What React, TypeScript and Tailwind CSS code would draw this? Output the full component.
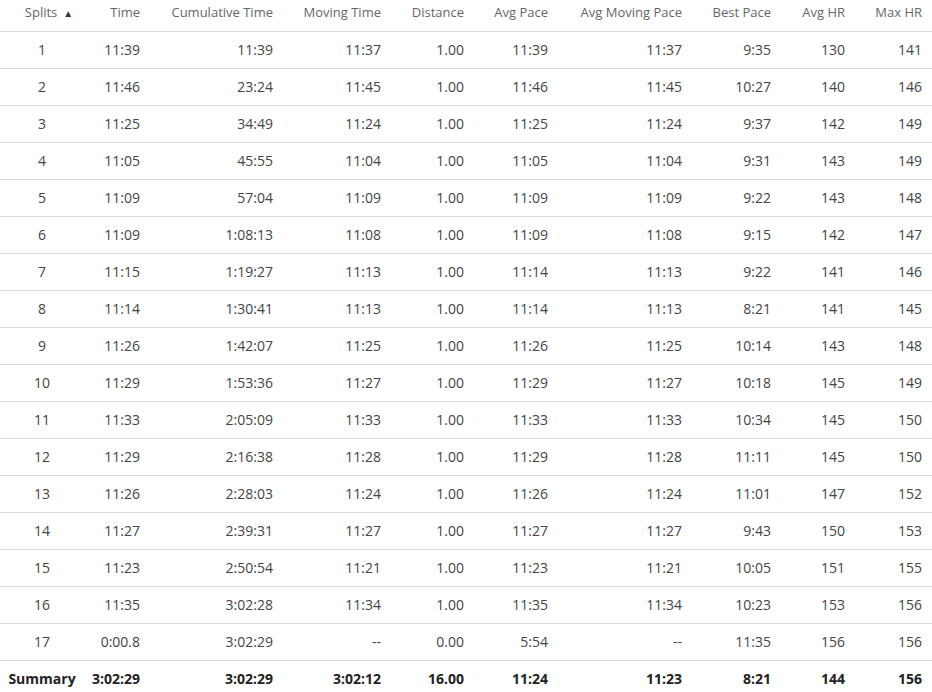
const splits = [
  ["1", "11:39", "11:39", "11:37", "1.00", "11:39", "11:37", "9:35", "130", "141"],
  ["2", "11:46", "23:24", "11:45", "1.00", "11:46", "11:45", "10:27", "140", "146"],
  ["3", "11:25", "34:49", "11:24", "1.00", "11:25", "11:24", "9:37", "142", "149"],
  ["4", "11:05", "45:55", "11:04", "1.00", "11:05", "11:04", "9:31", "143", "149"],
  ["5", "11:09", "57:04", "11:09", "1.00", "11:09", "11:09", "9:22", "143", "148"],
  ["6", "11:09", "1:08:13", "11:08", "1.00", "11:09", "11:08", "9:15", "142", "147"],
  ["7", "11:15", "1:19:27", "11:13", "1.00", "11:14", "11:13", "9:22", "141", "146"],
  ["8", "11:14", "1:30:41", "11:13", "1.00", "11:14", "11:13", "8:21", "141", "145"],
  ["9", "11:26", "1:42:07", "11:25", "1.00", "11:26", "11:25", "10:14", "143", "148"],
  ["10", "11:29", "1:53:36", "11:27", "1.00", "11:29", "11:27", "10:18", "145", "149"],
  ["11", "11:33", "2:05:09", "11:33", "1.00", "11:33", "11:33", "10:34", "145", "150"],
  ["12", "11:29", "2:16:38", "11:28", "1.00", "11:29", "11:28", "11:11", "145", "150"],
  ["13", "11:26", "2:28:03", "11:24", "1.00", "11:26", "11:24", "11:01", "147", "152"],
  ["14", "11:27", "2:39:31", "11:27", "1.00", "11:27", "11:27", "9:43", "150", "153"],
  ["15", "11:23", "2:50:54", "11:21", "1.00", "11:23", "11:21", "10:05", "151", "155"],
  ["16", "11:35", "3:02:28", "11:34", "1.00", "11:35", "11:34", "10:23", "153", "156"],
  ["17", "0:00.8", "3:02:29", "--", "0.00", "5:54", "--", "11:35", "156", "156"],
];

const summary = ["Summary", "3:02:29", "3:02:29", "3:02:12", "16.00", "11:24", "11:23", "8:21", "144", "156"];

const headers = ["Time", "Cumulative Time", "Moving Time", "Distance", "Avg Pace", "Avg Moving Pace", "Best Pace", "Avg HR", "Max HR"];

const cols = "grid grid-cols-[84px_66px_133px_108px_83px_84px_134px_89px_74px_77px] items-center";

export default function App() {
  return (
    <div className="w-[932px] h-[692px] overflow-hidden bg-white text-[14px] font-['Open_Sans',sans-serif]">
      {/* header */}
      <div className={`${cols} h-[32px] border-b border-[#dcdcdc] text-[13px] text-[#666] pb-[5px]`}>
        <div className="flex items-center justify-center gap-[6px] pl-[14px]">
          <span>Splits</span>
          <span className="text-[10px] text-[#333]">▲</span>
        </div>
        {headers.map((h) => (
          <div key={h} className="text-right pr-[10px] whitespace-nowrap">
            {h}
          </div>
        ))}
      </div>

      {splits.map((row) => (
        <div key={row[0]} className={`${cols} h-[37px] border-b border-[#dcdcdc] text-[#444] pb-[2px]`}>
          {row.map((cell, i) => (
            <div key={i} className={i === 0 ? "text-center" : "text-right pr-[10px]"}>
              {cell}
            </div>
          ))}
        </div>
      ))}

      <div className={`${cols} h-[37px] font-bold text-[#222] pb-[2px]`}>
        {summary.map((cell, i) => (
          <div key={i} className={i === 0 ? "text-center" : "text-right pr-[10px]"}>
            {cell}
          </div>
        ))}
      </div>
    </div>
  );
}
